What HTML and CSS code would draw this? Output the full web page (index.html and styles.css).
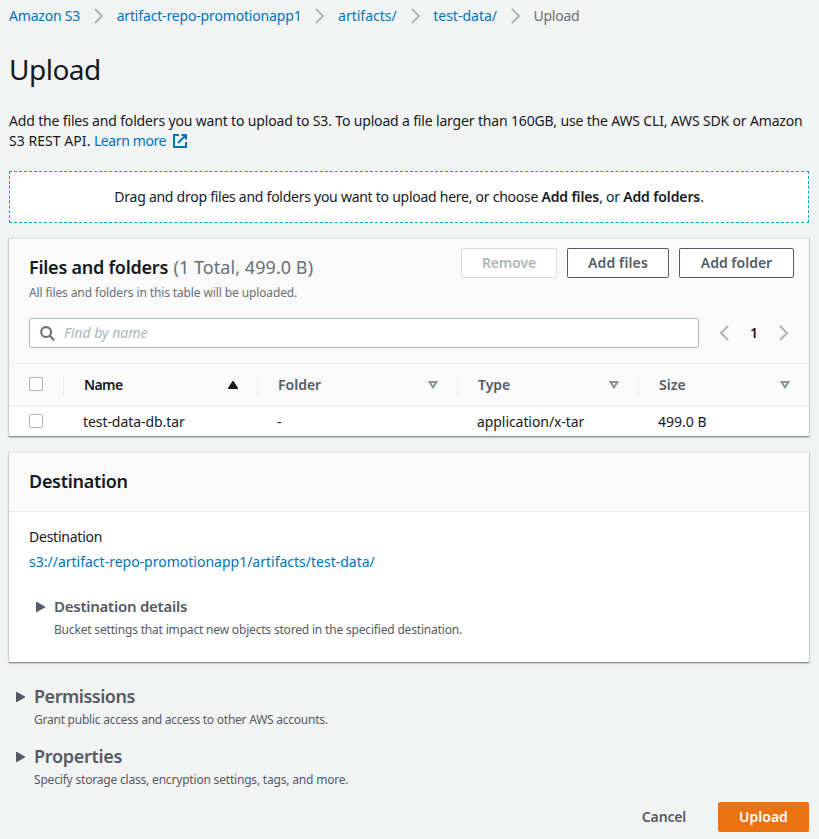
FILE: index.html
```
<!DOCTYPE html>
<html lang="en">
<head>
<meta charset="utf-8">
<title>Upload</title>
<link rel="stylesheet" href="styles.css">
</head>
<body>
<svg class="defs" aria-hidden="true">
  <symbol id="chevron" viewBox="0 0 10 16"><path d="M1 1l7 7-7 7" fill="none" stroke="#aab7b8" stroke-width="2"/></symbol>
  <symbol id="sort" viewBox="0 0 10 8"><path d="M1.5 1h7L5 6.4z" fill="none" stroke="#879596" stroke-width="2"/></symbol>
  <symbol id="caret" viewBox="0 0 9 10"><path d="M0 0h1l8 4.5v1L1 10H0z" fill="#545b64"/></symbol>
</svg>
<nav class="breadcrumbs">
  <a class="crumb crumb-service">Amazon S3</a>
  <svg class="chevron"><use href="#chevron"/></svg>
  <a class="crumb crumb-bucket">artifact-repo-promotionapp1</a>
  <svg class="chevron"><use href="#chevron"/></svg>
  <a class="crumb">artifacts/</a>
  <svg class="chevron"><use href="#chevron"/></svg>
  <a class="crumb">test-data/</a>
  <svg class="chevron"><use href="#chevron"/></svg>
  <span class="crumb crumb-current">Upload</span>
</nav>
<main>
  <h1>Upload</h1>
  <p class="intro">Add the files and folders you want to upload to S3. To upload a file larger than 160GB, use the AWS CLI, AWS SDK or Amazon<br><span class="intro-end">S3 REST API.</span> <a class="learn">Learn more<svg class="external" viewBox="0 0 14 14"><path d="M6 1H1v12h12V8M8.5 1H13v4.5M13 1L5 9" fill="none" stroke="#0073bb" stroke-width="2"/></svg></a></p>

  <div class="dropzone"><p>Drag and drop files and folders you want to upload here, or choose <b>Add files</b>, or <b>Add folders</b>.</p></div>

  <section class="card files">
    <header class="files-header">
      <div class="files-title">
        <h2>Files and folders <span class="count">(1 Total, 499.0 B)</span></h2>
        <p class="hint files-hint">All files and folders in this table will be uploaded.</p>
      </div>
      <div class="actions">
        <button class="btn btn-remove" disabled>Remove</button>
        <button class="btn btn-files">Add files</button>
        <button class="btn btn-folder">Add folder</button>
      </div>
    </header>
    <div class="filter">
      <div class="search">
        <svg class="search-icon" viewBox="0 0 16 16"><circle cx="6.5" cy="6.5" r="5.3" fill="none" stroke="#687078" stroke-width="2.2"/><path d="M10.2 10.2l5 5" stroke="#687078" stroke-width="2.4"/></svg>
        <span class="placeholder">Find by name</span>
      </div>
      <div class="pager">
        <svg class="chevron chevron-back"><use href="#chevron"/></svg>
        <b class="page">1</b>
        <svg class="chevron"><use href="#chevron"/></svg>
      </div>
    </div>
    <div class="row head">
      <div class="cell"><span class="checkbox"></span></div>
      <div class="cell sorted"><span class="name-label">Name</span><svg class="sort-icon" viewBox="0 0 10 8"><path d="M4.5 0h1L10 7v1H0V7z" fill="#16191f"/></svg></div>
      <div class="cell"><span>Folder</span><svg class="sort-icon"><use href="#sort"/></svg></div>
      <div class="cell"><span>Type</span><svg class="sort-icon"><use href="#sort"/></svg></div>
      <div class="cell"><span>Size</span><svg class="sort-icon"><use href="#sort"/></svg></div>
    </div>
    <div class="row data">
      <div class="cell"><span class="checkbox"></span></div>
      <div class="cell file-name">test-data-db.tar</div>
      <div class="cell">-</div>
      <div class="cell file-name">application/x-tar</div>
      <div class="cell">499.0 B</div>
    </div>
  </section>

  <section class="card destination">
    <header class="destination-header"><h2>Destination</h2></header>
    <div class="destination-body">
      <p class="label">Destination</p>
      <a class="path">s3://artifact-repo-promotionapp1/artifacts/test-data/</a>
      <div class="expander details">
        <svg class="caret"><use href="#caret"/></svg>
        <div>
          <h3 class="details-title">Destination details</h3>
          <p class="hint">Bucket settings that impact new objects stored in the specified destination.</p>
        </div>
      </div>
    </div>
  </section>

  <div class="expander section-expander">
    <svg class="caret"><use href="#caret"/></svg>
    <div>
      <h2 class="permissions">Permissions</h2>
      <p class="hint permissions-hint">Grant public access and access to other AWS accounts.</p>
    </div>
  </div>
  <div class="expander section-expander">
    <svg class="caret"><use href="#caret"/></svg>
    <div>
      <h2>Properties</h2>
      <p class="hint">Specify storage class, encryption settings, tags, and more.</p>
    </div>
  </div>

  <footer class="footer">
    <button class="btn btn-cancel">Cancel</button>
    <button class="btn btn-primary">Upload</button>
  </footer>
</main>
</body>
</html>
```
FILE: styles.css
```
* { box-sizing: border-box; }
body {
  margin: 0;
  padding: 0 10px 0 9px;
  background: #f2f3f3;
  color: #16191f;
  font: 14px/20px "Noto Sans", sans-serif;
}
h1, h2, h3, p { margin: 0; }
svg { display: block; flex: none; }
a { color: #0073bb; }
b { font-weight: 600; }
.defs { display: none; }

.breadcrumbs { display: flex; align-items: center; height: 32px; }
.breadcrumbs .chevron { margin: 0 12.7px 0 13.8px; }
.crumb-service { letter-spacing: -0.2px; }
.crumb-bucket { letter-spacing: -0.16px; }
.crumb-current { color: #687078; letter-spacing: -0.25px; }
.chevron { width: 10px; height: 16px; }

h1 { margin-top: 19px; font-size: 28px; line-height: 36px; font-weight: 400; letter-spacing: -0.5px; }
.intro { margin-top: 24px; letter-spacing: -0.16px; white-space: nowrap; }
.intro-end { letter-spacing: 0.05px; }
.learn { letter-spacing: -0.4px; }
.external { display: inline-block; width: 14px; height: 14px; margin-left: 7px; vertical-align: -2px; }

.dropzone {
  display: flex; align-items: center; justify-content: center;
  height: 52px; margin-top: 20px;
  background: #fff; border: 1px dashed #00a1c9;
  letter-spacing: -0.26px;
}
.dropzone b { letter-spacing: -0.12px; }

.card {
  background: #fff;
  box-shadow: 0 1px 1px rgba(0, 28, 36, .12), 1px 0 1px rgba(0, 28, 36, .15), -1px 0 1px rgba(0, 28, 36, .15);
  border-top: 1px solid #eaeded;
  border-bottom: 1px solid #879596;
}
.files { height: 199px; margin-top: 15px; }
h2 { font-size: 18px; line-height: 22px; font-weight: 600; letter-spacing: -0.3px; }
.count { margin-left: 1px; font-weight: 400; color: #687078; letter-spacing: 0.06px; }
.hint { font-size: 12px; line-height: 18px; color: #545b64; letter-spacing: -0.19px; }
.files-header { display: flex; justify-content: space-between; height: 79px; padding: 9px 15px 0 20px; background: #fafafa; }
.files-title { padding-top: 8px; }
.files-title h2 { letter-spacing: -0.25px; }
.files-hint { margin-top: 6px; color: #687078; letter-spacing: -0.12px; }
.actions { display: flex; gap: 10px; }
.btn {
  height: 30px; padding: 0;
  border: 1px solid #545b64; border-radius: 2px;
  background: #fff; color: #545b64;
  font: 600 14px/20px "Noto Sans", sans-serif;
}
.btn-remove { width: 96px; color: #aab7b8; border-color: #d5dbdb; letter-spacing: -0.1px; }
.btn-files { width: 102px; letter-spacing: 0.13px; }
.btn-folder { width: 115px; }

.filter { display: flex; height: 46px; padding: 0 20px; background: #fafafa; border-bottom: 1px solid #eaeded; }
.search { display: flex; align-items: center; width: 670px; height: 30px; padding-left: 10px; background: #fff; border: 1px solid #aab7b8; border-radius: 2px; }
.search-icon { width: 15px; height: 15px; }
.placeholder { margin-left: 9px; color: #aab7b8; font-style: italic; }
.pager { display: flex; flex: 1; align-items: center; justify-content: space-between; height: 30px; padding-left: 20px; }
.chevron-back { transform: scaleX(-1); }

.row { display: grid; grid-template-columns: 55px 194px 200px 181px 170px; }
.head { height: 43px; align-items: center; background: #fafafa; border-bottom: 1px solid #eaeded; color: #545b64; font-weight: 600; }
.head .cell { display: flex; align-items: center; justify-content: space-between; height: 21px; padding: 0 19px 0 20px; border-right: 1px solid #eaeded; }
.head .cell:last-child { border-right: 0; }
.head .sorted { color: #16191f; }
.name-label { letter-spacing: -0.6px; }
.sort-icon { width: 10px; height: 8px; }
.checkbox { display: block; width: 14px; height: 14px; margin-bottom: 2px; background: #fff; border: 1px solid #aab7b8; border-radius: 2px; }
.data { height: 30px; align-items: center; }
.data .cell { padding-left: 19px; }
.data .cell:first-child { padding-left: 20px; }
.file-name { letter-spacing: -0.07px; }

.destination { height: 211px; margin-top: 15px; }
.destination-header { display: flex; align-items: center; height: 59px; padding: 0 0 2px 20px; background: #fafafa; border-bottom: 1px solid #eaeded; }
.destination-body { padding: 15px 20px 0; }
.label { letter-spacing: -0.24px; }
.path { display: block; margin-top: 5px; }

.expander { display: flex; align-items: flex-start; color: #545b64; }
.caret { width: 9px; height: 10px; }
.details { margin-top: 23px; }
.details .caret { margin: 7px 9px 0 7px; }
.details-title { font-size: 15px; line-height: 22px; font-weight: 600; letter-spacing: -0.25px; }
.details .hint { margin-top: 4px; letter-spacing: -0.18px; }
.section-expander { height: 60px; }
.card + .section-expander { margin-top: 22px; }
.section-expander .caret { margin: 7px 9px 0 7px; }
.section-expander .hint { margin-top: 4px; }
.permissions { letter-spacing: -0.48px; }
.section-expander .permissions-hint { letter-spacing: -0.24px; }

.footer { display: flex; justify-content: flex-end; margin-top: -3px; }
.btn-cancel { width: 88px; margin-right: 10px; background: none; border-color: transparent; letter-spacing: -0.15px; }
.btn-primary { width: 91px; background: #ec7211; border-color: #ec7211; color: #fff; }
```
